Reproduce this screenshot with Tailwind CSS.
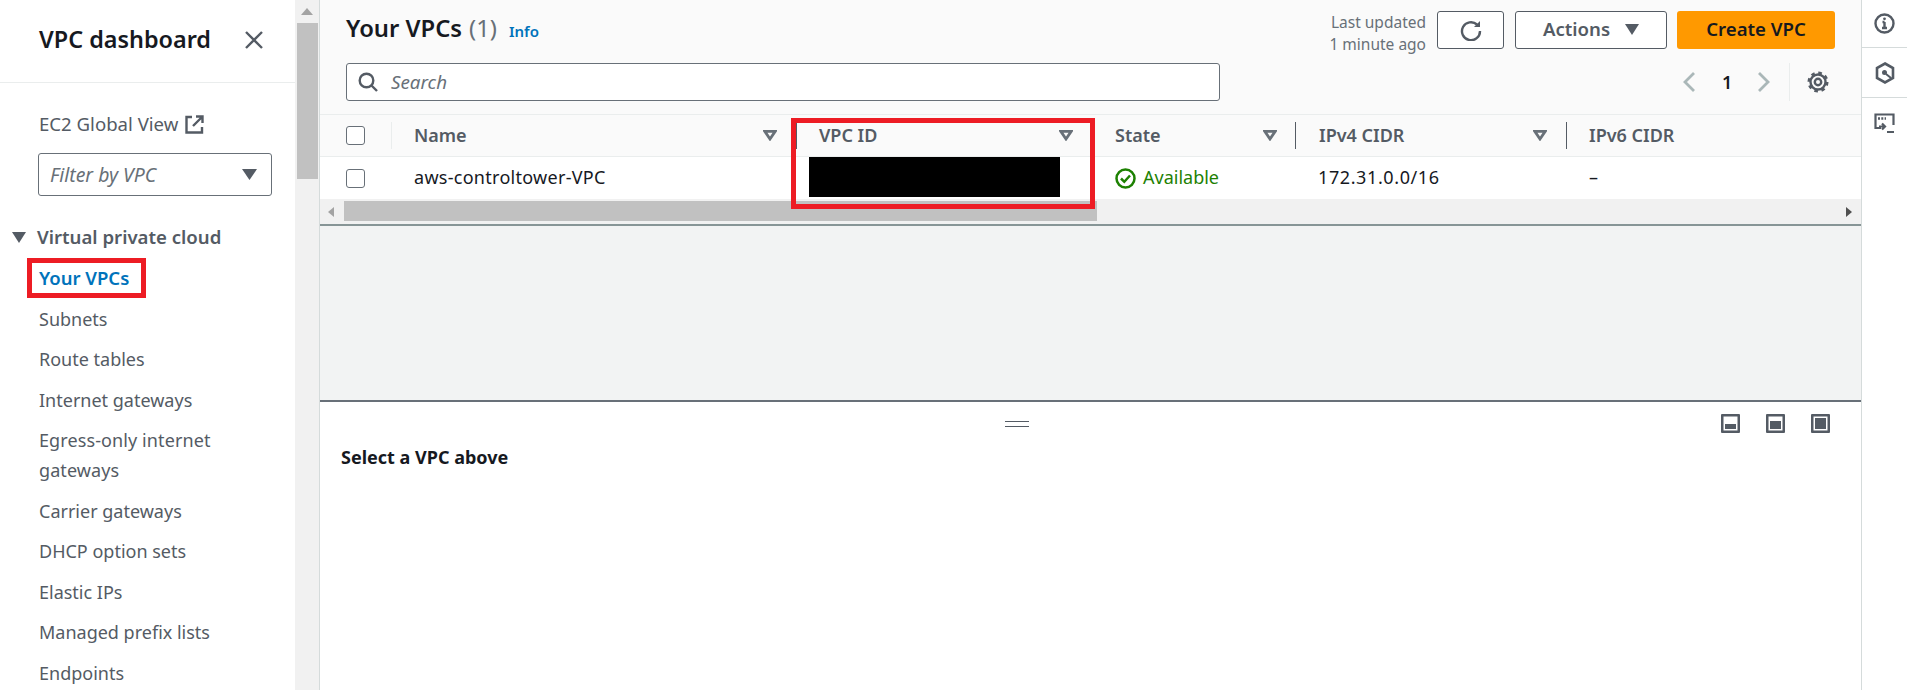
<!DOCTYPE html>
<html lang="en">
<head>
<meta charset="UTF-8" />
<title>Your VPCs</title>
<script src="https://cdn.jsdelivr.net/npm/@tailwindcss/browser@4"></script>
</head>
<body class="bg-white">
<div class="relative flex h-[690px] w-[1907px] overflow-hidden font-['Noto_Sans',sans-serif] text-[18px] text-[#16191f]">

  <!-- Side navigation -->
  <aside class="flex w-[295px] shrink-0 flex-col bg-white text-[#545b64]">
    <div class="flex h-[83px] shrink-0 items-center justify-between border-b border-[#eaeded] pl-[39px] pr-[32px] pb-[3px]">
      <h2 class="text-[23.400px] font-semibold text-[#16191f]">VPC dashboard</h2>
      <svg class="h-[18px] w-[18px]" viewBox="0 0 18 18" fill="none" stroke="#545b64" stroke-width="2.400"><path d="M1 1 17 17M17 1 1 17" /></svg>
    </div>
    <div class="pl-[38px] pr-[23px] pt-[26px]">
      <div class="flex items-center gap-[7px] pl-px leading-[30px]">
        <span class="text-[18.600px]">EC2 Global View</span>
        <svg class="h-[19px] w-[19px]" viewBox="0 0 19 19" fill="none" stroke="#545b64" stroke-width="2.400"><path d="M7 2H1.500v15.500H17V12M11 1.500h6.500V8M17 2 8 11" /></svg>
      </div>
      <div class="mt-[14px] flex h-[43px] items-center justify-between rounded-[3px] border border-[#687078] pl-[11px] pr-[14px]">
        <span class="text-[19.400px] italic text-[#687078]">Filter by VPC</span>
        <svg class="h-[11px] w-[15px]" viewBox="0 0 15 11" fill="#545b64"><path d="M0 0h15L7.500 11z" /></svg>
      </div>
    </div>
    <div class="mt-[26px] flex items-center gap-[11px] pl-[12px] text-[18.600px] font-semibold leading-[30px]">
      <svg class="h-[11px] w-[14px]" viewBox="0 0 14 11" fill="#545b64"><path d="M0 0h14L7 11z" /></svg>
      <span>Virtual private cloud</span>
    </div>
    <nav class="mt-[11px] flex flex-col gap-[10.500px] pl-[39px] pr-[40px] leading-[30px]">
      <a class="text-[18.500px] font-semibold text-[#0073bb]">Your VPCs</a>
      <a>Subnets</a>
      <a>Route tables</a>
      <a>Internet gateways</a>
      <a class="tracking-[0.1px]">Egress-only internet gateways</a>
      <a>Carrier gateways</a>
      <a>DHCP option sets</a>
      <a>Elastic IPs</a>
      <a>Managed prefix lists</a>
      <a>Endpoints</a>
    </nav>
  </aside>

  <!-- Page scrollbar -->
  <div class="flex w-[25px] shrink-0 flex-col items-center border-r border-[#d5dbdb] bg-[#f1f1f1]">
    <svg class="mt-[8px] h-[7px] w-[12px]" viewBox="0 0 12 7" fill="#a3a3a3"><path d="M6 0l6 7H0z" /></svg>
    <div class="mt-[8px] h-[156px] w-[21px] bg-[#c1c1c1]"></div>
  </div>

  <!-- Main column -->
  <main class="flex w-[1541px] shrink-0 flex-col bg-[#f2f3f3]">
    <section class="flex h-[115px] shrink-0 justify-between border-b border-[#eaeded] bg-[#fafafa] px-[26px]">
      <div class="flex w-[874px] flex-col">
        <div class="mt-[13px] flex items-baseline leading-[30px]">
          <h1 class="text-[23.800px] font-semibold">Your VPCs</h1>
          <span class="ml-[7px] text-[23.800px] text-[#687078]">(1)</span>
          <a class="ml-[12px] text-[15px] font-semibold text-[#0073bb]">Info</a>
        </div>
        <div class="mt-[17px] flex h-[38px] items-center rounded-[3px] border border-[#687078] bg-white pl-[11px]">
          <svg class="h-[20px] w-[20px]" viewBox="0 0 20 20" fill="none" stroke="#545b64" stroke-width="2.400"><circle cx="8.500" cy="8.500" r="6.800" /><path d="M13.500 13.500l5.500 5.500" /></svg>
          <span class="ml-[13px] text-[18.800px] italic text-[#687078]">Search</span>
        </div>
      </div>
      <div class="flex flex-col items-end">
        <div class="mt-[11px] flex items-start">
          <div class="mr-[11px] text-right text-[15.500px] leading-[22px] text-[#687078]">Last updated<br />1 minute ago</div>
          <button class="flex h-[38px] w-[67px] items-center justify-center rounded-[3px] border border-[#545b64] bg-white">
            <svg class="h-[22px] w-[22px]" viewBox="0 0 22 22" fill="none" stroke="#545b64" stroke-width="2.400"><path d="M17 5.500A9 9 0 1 0 20 12" /><path d="M20 2v6h-6z" fill="#545b64" stroke="none" /></svg>
          </button>
          <button class="ml-[11px] flex h-[38px] w-[152px] items-center justify-center gap-[15px] rounded-[3px] border border-[#545b64] bg-white pb-[2px] text-[18.600px] font-semibold text-[#545b64]">
            Actions
            <svg class="h-[11px] w-[14px]" viewBox="0 0 14 11" fill="#545b64"><path d="M0 0h14L7 11z" /></svg>
          </button>
          <button class="ml-[10px] flex h-[38px] w-[158px] items-center justify-center rounded-[3px] bg-[#ff9900] pb-[2px] text-[18.600px] font-semibold">Create VPC</button>
        </div>
        <div class="mt-[8px] flex h-[38px] items-center pr-[6px]">
          <svg class="h-[20px] w-[12px]" viewBox="0 0 12 20" fill="none" stroke="#aab7b8" stroke-width="2.800"><path d="M11 1 2 10l9 9" /></svg>
          <span class="ml-[27px] w-[8px] font-semibold">1</span>
          <svg class="ml-[28px] h-[20px] w-[12px]" viewBox="0 0 12 20" fill="none" stroke="#aab7b8" stroke-width="2.800"><path d="M1 1l9 9-9 9" /></svg>
          <div class="ml-[19px] h-[38px] w-px bg-[#eaeded]"></div>
          <svg class="ml-[17px] h-[22px] w-[22px]" viewBox="0 0 22 22" fill="none" stroke="#545b64"><circle cx="11" cy="11" r="3.200" stroke-width="2.400" /><circle cx="11" cy="11" r="7.500" stroke-width="2.400" /><circle cx="11" cy="11" r="9" stroke-width="3" stroke-dasharray="3.500 3.570" /></svg>
        </div>
      </div>
    </section>

    <!-- Table head -->
    <div class="grid h-[42px] shrink-0 grid-cols-[72px_405px_296px_203px_271px_1fr] items-center border-b border-[#eaeded] bg-[#fafafa] font-semibold text-[#545b64]">
      <div class="flex items-center justify-between pl-[26px]">
        <span class="h-[19px] w-[19px] rounded-[3px] border border-[#687078] bg-white"></span>
        <span class="h-[27px] w-px bg-[#eaeded]"></span>
      </div>
      <div class="flex items-center pl-[22px]">
        <span class="flex-1">Name</span>
        <svg class="h-[11px] w-[14px]" viewBox="0 0 14 11" fill="none" stroke="#687078" stroke-width="2.800"><path d="M1.800 1.400h10.400L7 9z" /></svg>
        <span class="ml-[19px] h-[27px] w-px bg-[#545b64]"></span>
      </div>
      <div class="flex items-center pl-[22px]">
        <span class="flex-1">VPC ID</span>
        <svg class="h-[11px] w-[14px]" viewBox="0 0 14 11" fill="none" stroke="#687078" stroke-width="2.800"><path d="M1.800 1.400h10.400L7 9z" /></svg>
        <span class="ml-[19px] h-[27px] w-px bg-[#545b64]"></span>
      </div>
      <div class="flex items-center pl-[22px]">
        <span class="flex-1">State</span>
        <svg class="h-[11px] w-[14px]" viewBox="0 0 14 11" fill="none" stroke="#687078" stroke-width="2.800"><path d="M1.800 1.400h10.400L7 9z" /></svg>
        <span class="ml-[18px] h-[27px] w-px bg-[#545b64]"></span>
      </div>
      <div class="flex items-center pl-[23px]">
        <span class="flex-1">IPv4 CIDR</span>
        <svg class="h-[11px] w-[14px]" viewBox="0 0 14 11" fill="none" stroke="#687078" stroke-width="2.800"><path d="M1.800 1.400h10.400L7 9z" /></svg>
        <span class="ml-[19px] h-[27px] w-px bg-[#545b64]"></span>
      </div>
      <div class="pl-[22px]">IPv6 CIDR</div>
    </div>

    <!-- Table row -->
    <div class="grid h-[42px] shrink-0 grid-cols-[72px_405px_296px_203px_271px_1fr] items-center bg-white">
      <div class="pl-[26px]"><span class="block h-[19px] w-[19px] rounded-[3px] border border-[#687078] bg-white"></span></div>
      <div class="pb-[2px] pl-[22px] tracking-[0.28px]">aws-controltower-VPC</div>
      <div class="self-start pl-[12px]"><div class="h-[40px] w-[251px] bg-black"></div></div>
      <div class="flex items-center gap-[7px] pl-[22px] text-[#1d8102]">
        <svg class="h-[21px] w-[21px]" viewBox="0 0 21 21" fill="none" stroke="#1d8102" stroke-width="2.500"><circle cx="10.500" cy="10.500" r="9" /><path d="M6 10.500l3.300 3.300L15 7.500" /></svg>
        <span class="pb-[2px]">Available</span>
      </div>
      <div class="pb-[2px] pl-[22px] tracking-[0.6px]">172.31.0.0/16</div>
      <div class="pb-[2px] pl-[22px]">–</div>
    </div>

    <!-- Horizontal scrollbar -->
    <div class="flex h-[27px] shrink-0 items-start border-b-2 border-[#879596] bg-[#f1f1f1] pt-[2px]">
      <svg class="ml-[8px] mt-[6px] h-[10px] w-[6px]" viewBox="0 0 6 10" fill="#a3a3a3"><path d="M6 0v10L0 5z" /></svg>
      <div class="ml-[10px] h-[20px] w-[753px] bg-[#c1c1c1]"></div>
      <svg class="ml-auto mr-[9px] mt-[6px] h-[10px] w-[6px]" viewBox="0 0 6 10" fill="#505050"><path d="M0 0v10l6-5z" /></svg>
    </div>

    <div class="h-[174px] shrink-0"></div>

    <!-- Split panel -->
    <section class="flex-1 border-t-2 border-[#687078] bg-white">
      <div class="flex h-[43px] items-start pr-[31px] pt-[12px]">
        <div class="ml-[685px] mt-[7px] h-[6px] w-[24px] border-y border-[#545b64]"></div>
        <div class="ml-auto flex gap-[26px]">
          <svg class="h-[19px] w-[19px]" viewBox="0 0 19 19" fill="#545b64"><path fill-rule="evenodd" d="M1 0h17a1 1 0 0 1 1 1v17a1 1 0 0 1-1 1H1a1 1 0 0 1-1-1V1a1 1 0 0 1 1-1zm1.500 2.500v14h14v-14z" /><rect x="4" y="10" width="11" height="5" /></svg>
          <svg class="h-[19px] w-[19px]" viewBox="0 0 19 19" fill="#545b64"><path fill-rule="evenodd" d="M1 0h17a1 1 0 0 1 1 1v17a1 1 0 0 1-1 1H1a1 1 0 0 1-1-1V1a1 1 0 0 1 1-1zm1.500 2.500v14h14v-14z" /><rect x="4" y="7" width="11" height="8" /></svg>
          <svg class="h-[19px] w-[19px]" viewBox="0 0 19 19" fill="#545b64"><path fill-rule="evenodd" d="M1 0h17a1 1 0 0 1 1 1v17a1 1 0 0 1-1 1H1a1 1 0 0 1-1-1V1a1 1 0 0 1 1-1zm1.500 2.500v14h14v-14z" /><rect x="4" y="4" width="11" height="11" /></svg>
        </div>
      </div>
      <h3 class="pl-[21px] text-[18px] font-bold leading-[24px]">Select a VPC above</h3>
    </section>
  </main>

  <!-- Tools rail -->
  <div class="flex flex-1 flex-col border-l border-[#d5dbdb] bg-white">
    <div class="flex h-[48px] items-center justify-center border-b border-[#d5dbdb]">
      <svg class="h-[21px] w-[21px]" viewBox="0 0 21 21" fill="none" stroke="#545b64" stroke-width="2.400"><circle cx="10.500" cy="10.500" r="9" /><path d="M10.500 9v6M8 15h5M8.500 9h2" /><circle cx="10.500" cy="5.800" r="1.400" fill="#545b64" stroke="none" /></svg>
    </div>
    <div class="flex h-[50px] items-center justify-center border-b border-[#d5dbdb]">
      <svg class="h-[22px] w-[20px]" viewBox="0 0 20 22" fill="none" stroke="#545b64" stroke-width="2.600"><path d="M10 1.500l8 4.500v10l-8 4.500L2 16V6z" /><circle cx="9.500" cy="10.500" r="2.500" fill="#545b64" stroke="none" /><path d="M11 12l5 4" stroke-width="2" /></svg>
    </div>
    <div class="flex h-[50px] items-center justify-center">
      <svg class="h-[21px] w-[21px]" viewBox="0 0 21 21" fill="none" stroke="#545b64" stroke-width="2.200"><path d="M7 15H1.500V1.500h18V12" /><path d="M4 5.500h8" stroke-width="2.400" stroke-dasharray="2 1.300" /><path d="M5 13.500h6M8 10.500l3 3-3 3M13 19h7" /></svg>
    </div>
  </div>

  <!-- Red annotation boxes drawn over the screenshot -->
  <div class="absolute left-[27px] top-[258px] h-[40px] w-[119px] border-[5px] border-[#ed1c24]"></div>
  <div class="absolute left-[791px] top-[118px] h-[91px] w-[304px] border-[5px] border-[#ed1c24]"></div>
</div>
</body>
</html>
